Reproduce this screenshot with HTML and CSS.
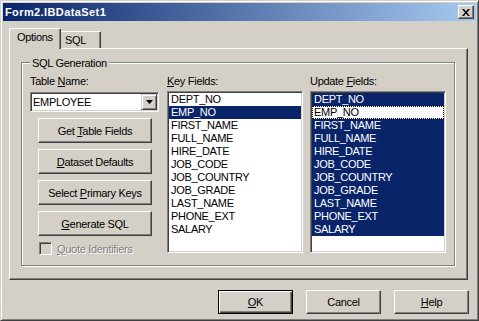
FILE: index.html
```html
<!DOCTYPE html>
<html lang="en">

<head>
  <meta charset="UTF-8" />
  <title>Form2.IBDataSet1</title>
  <link rel="stylesheet" href="styles.css">
</head>

<body>
  <div class="window">
    <div class="titlebar">
      <span class="title">Form2.IBDataSet1</span>
      <span class="close-btn">
        <svg width="8" height="7" viewBox="0 0 8 7"><path d="M0 0h2l2 2.4 2-2.4h2l-3 3.5 3 3.5h-2l-2-2.4-2 2.4h-2l3-3.5z" /></svg>
      </span>
    </div>

    <div class="tabs">
      <div class="tab active">Options</div>
      <div class="tab">SQL</div>
    </div>

    <div class="panel">
      <div class="group">
        <span class="legend">SQL Generation</span>
        <div class="group-body">
          <div class="col col-left">
            <label class="caption">Table <u>N</u>ame:</label>
            <div class="combo">
              <span class="combo-text">EMPLOYEE</span>
              <span class="drop-btn">
                <svg width="7" height="4" viewBox="0 0 7 4"><path d="M0 0h7l-3.5 4z" /></svg>
              </span>
            </div>
            <button type="button" class="btn side-btn">Get <u>T</u>able Fields</button>
            <button type="button" class="btn side-btn"><u>D</u>ataset Defaults</button>
            <button type="button" class="btn side-btn">Select <u>P</u>rimary Keys</button>
            <button type="button" class="btn side-btn"><u>G</u>enerate SQL</button>
            <div class="check disabled">
              <span class="check-box"></span>
              <span><u>Q</u>uote Identifiers</span>
            </div>
          </div>

          <div class="col col-key">
            <label class="caption"><u>K</u>ey Fields:</label>
            <ul class="listbox">
              <li>DEPT_NO</li>
              <li class="selected">EMP_NO</li>
              <li>FIRST_NAME</li>
              <li>FULL_NAME</li>
              <li>HIRE_DATE</li>
              <li>JOB_CODE</li>
              <li>JOB_COUNTRY</li>
              <li>JOB_GRADE</li>
              <li>LAST_NAME</li>
              <li>PHONE_EXT</li>
              <li>SALARY</li>
            </ul>
          </div>

          <div class="col">
            <label class="caption">Update <u>F</u>ields:</label>
            <ul class="listbox">
              <li class="selected">DEPT_NO</li>
              <li class="focused">EMP_NO</li>
              <li class="selected">FIRST_NAME</li>
              <li class="selected">FULL_NAME</li>
              <li class="selected">HIRE_DATE</li>
              <li class="selected">JOB_CODE</li>
              <li class="selected">JOB_COUNTRY</li>
              <li class="selected">JOB_GRADE</li>
              <li class="selected">LAST_NAME</li>
              <li class="selected">PHONE_EXT</li>
              <li class="selected">SALARY</li>
            </ul>
          </div>
        </div>
      </div>
    </div>

    <div class="footer">
      <button type="button" class="btn dlg-btn default"><u>O</u>K</button>
      <button type="button" class="btn dlg-btn">Cancel</button>
      <button type="button" class="btn dlg-btn"><u>H</u>elp</button>
    </div>
  </div>
</body>

</html>
```

FILE: styles.css
```css
* {
  box-sizing: border-box
}

body {
  margin: 0;
  font-family: "Liberation Sans", Arial, sans-serif;
  font-size: 11px;
  letter-spacing: -0.3px;
  color: #000;
}

/* Outer dialog frame */
.window {
  width: 479px;
  height: 321px;
  padding: 2px;
  display: flex;
  flex-direction: column;
  background: #d4d0c8;
  border: 1px solid;
  border-color: #d4d0c8 #404040 #404040 #d4d0c8;
  box-shadow: inset 1px 1px #fff, inset -1px -1px #808080;
}

.titlebar {
  height: 18px;
  padding: 0 2px;
  display: flex;
  align-items: center;
  justify-content: space-between;
  background: linear-gradient(to right, #0a246a, #a6caf0);
}

.title {
  color: #fff;
  font-weight: bold;
  letter-spacing: 0.4px;
}

.close-btn {
  width: 16px;
  height: 14px;
  display: flex;
  align-items: center;
  justify-content: center;
  background: #d4d0c8;
  border: 1px solid;
  border-color: #fff #404040 #404040 #fff;
  box-shadow: inset -1px -1px #808080;
}

/* Tab strip */
.tabs {
  height: 22px;
  margin: 5px 0 0 6px;
  display: flex;
  align-items: flex-end;
}

.tab {
  padding-top: 2px;
  line-height: 13px;
  background: #d4d0c8;
  border-top: 1px solid #fff;
  border-left: 1px solid #fff;
  border-right: 1px solid #404040;
  border-radius: 2px 2px 0 0;
  box-shadow: inset -1px 0 #808080;
}

.tab.active {
  position: relative;
  z-index: 1;
  width: 52px;
  height: 21px;
  margin-bottom: -1px;
  padding-left: 7px;
}

.tab:not(.active) {
  width: 40px;
  height: 17px;
  padding-left: 4px;
  border-left: none;
}

.panel {
  width: 459px;
  height: 232px;
  margin-left: 6px;
  padding: 13px 0 0 11px;
  border: 1px solid;
  border-color: #fff #404040 #404040 #fff;
  box-shadow: inset -1px -1px #808080;
}

/* Etched group box */
.group {
  width: 434px;
  height: 204px;
  padding-left: 8px;
  border: 1px solid #808080;
  box-shadow: inset 1px 1px #fff, 1px 1px #fff;
}

.legend {
  display: table;
  margin-top: -6px;
  padding: 0 2px;
  line-height: 13px;
  background: #d4d0c8;
}

.group-body {
  margin-top: 5px;
  display: flex;
}

.col {
  width: 136px;
  display: flex;
  flex-direction: column;
}

.col-left {
  width: 129px;
  margin-right: 8px;
}

.col-key {
  margin-right: 7px;
}

.caption {
  height: 13px;
  line-height: 13px;
  margin-bottom: 3px;
}

.combo {
  height: 20px;
  margin-top: 1px;
  padding: 1px;
  display: flex;
  align-items: center;
  background: #fff;
  border: 1px solid;
  border-color: #808080 #fff #fff #808080;
  box-shadow: inset 1px 1px #404040, inset -1px -1px #d4d0c8;
}

.combo-text {
  padding-left: 1px;
  line-height: 16px;
}

.drop-btn {
  width: 16px;
  height: 16px;
  margin-left: auto;
  display: flex;
  align-items: center;
  justify-content: center;
  background: #d4d0c8;
  border: 1px solid;
  border-color: #d4d0c8 #404040 #404040 #d4d0c8;
  box-shadow: inset 1px 1px #fff, inset -1px -1px #808080;
}

/* Raised push buttons */
.btn {
  padding: 0;
  font: inherit;
  letter-spacing: inherit;
  color: #000;
  background: #d4d0c8;
  border: 1px solid;
  border-color: #fff #404040 #404040 #fff;
  box-shadow: inset -1px -1px #808080;
}

.side-btn {
  width: 114px;
  height: 25px;
  margin: 6px 0 0 8px;
}

.check {
  margin: 6px 0 0 9px;
  display: flex;
  align-items: center;
}

.check-box {
  width: 13px;
  height: 13px;
  margin-right: 5px;
  background: #d4d0c8;
  border: 1px solid;
  border-color: #808080 #fff #fff #808080;
  box-shadow: inset 1px 1px #404040, inset -1px -1px #d4d0c8;
}

.disabled {
  color: #808080;
  text-shadow: 1px 1px #fff;
}

.listbox {
  height: 162px;
  margin: 0;
  padding: 0;
  list-style: none;
  background: #fff;
  border: 1px solid;
  border-color: #808080 #fff #fff #808080;
  box-shadow: inset 1px 1px #404040, inset -1px -1px #d4d0c8;
}

.listbox li {
  height: 13px;
  margin: 0 1px;
  padding-left: 2px;
  line-height: 13px;
}

.listbox li:first-child {
  margin-top: 1px;
}

.listbox li.selected {
  background: #0a246a;
  color: #fff;
}

.listbox li.focused {
  outline: 1px dotted #000;
  outline-offset: -1px;
}

/* Dialog buttons */
.footer {
  margin-top: 10px;
  padding-right: 7px;
  display: flex;
  justify-content: flex-end;
  gap: 13px;
}

.dlg-btn {
  width: 75px;
  height: 24px;
}

.dlg-btn.default {
  border: 1px solid #000;
  box-shadow: inset 1px 1px #fff, inset -1px -1px #404040, inset -2px -2px #808080;
}
```
